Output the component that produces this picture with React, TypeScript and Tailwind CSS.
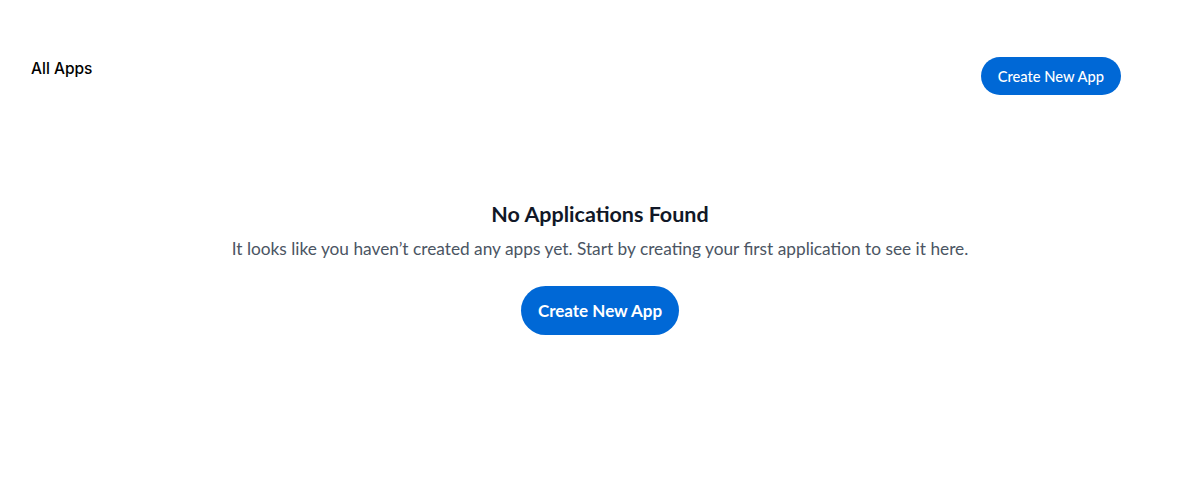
import { FC } from "react";

const CreateButton: FC<{ big?: boolean }> = ({ big }) => (
  <button
    className={
      big
        ? "h-[49px] px-[17px] rounded-full bg-[#0068d6] text-white text-[17px] font-bold"
        : "h-[38px] px-[17px] rounded-full bg-[#0068d6] text-white text-[14.7px] font-medium"
    }
  >
    Create New App
  </button>
);

const App: FC = () => {
  return (
    <div className="w-[1200px] h-[492px] bg-white font-['Lato',sans-serif] flex flex-col">
      <header className="flex justify-between items-start pl-[31px] pr-[79px] pt-[57px]">
        <h1 className="font-['Inter',sans-serif] text-[15.5px] font-medium text-black">
          All Apps
        </h1>
        <CreateButton />
      </header>

      <section className="flex flex-col items-center mt-[105px]">
        <h2 className="text-[21.5px] font-bold text-[#111827] leading-[28px]">
          No Applications Found
        </h2>
        <p className="text-[17.3px] text-[#4b5563] mt-[9px] leading-[24px]">
          It looks like you haven’t created any apps yet. Start by creating your first
          application to see it here.
        </p>
        <div className="mt-[25px]">
          <CreateButton big />
        </div>
      </section>
    </div>
  );
};

export default App;
